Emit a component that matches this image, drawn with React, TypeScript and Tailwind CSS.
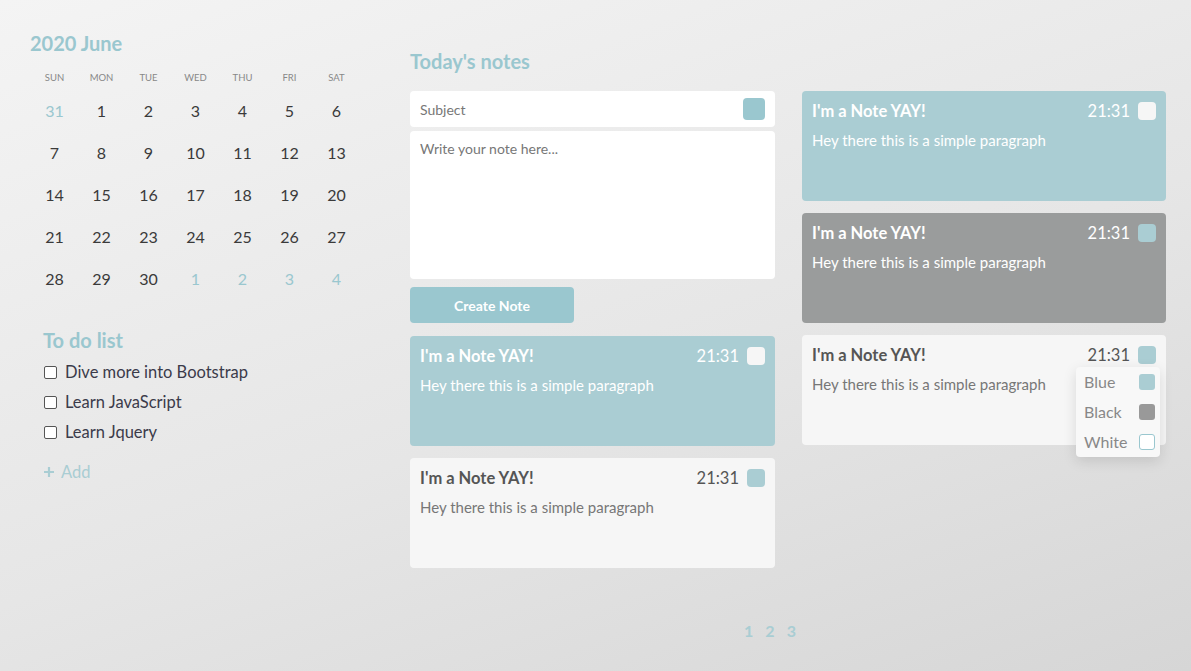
import React from 'react';

const font = { fontFamily: 'Lato, "Open Sans", sans-serif' };

const Note = ({ tone }: { tone: 'blue' | 'gray' | 'white' }) => {
  const bg = tone === 'blue' ? 'bg-[#aacdd3]' : tone === 'gray' ? 'bg-[#9a9c9c]' : 'bg-[#f6f6f6]';
  const text = tone === 'white' ? 'text-[#555]' : 'text-white';
  const body = tone === 'white' ? 'text-[#777]' : 'text-white';
  const swatch = tone === 'blue' ? 'bg-[#f6f6f6]' : 'bg-[#aacdd3]';
  return (
    <div className={`${bg} rounded-[4px] h-[110px] px-[10px] pt-[10px]`}>
      <div className="flex items-center justify-between h-[20px]">
        <span className={`${text} font-bold text-[16.5px]`}>I'm a Note YAY!</span>
        <div className="flex items-center gap-[8px]">
          <span className={`${text} text-[16.5px]`}>21:31</span>
          <span className={`${swatch} w-[18px] h-[18px] rounded-[4px]`} />
        </div>
      </div>
      <p className={`${body} text-[15px] mt-[8px]`}>Hey there this is a simple paragraph</p>
    </div>
  );
};

const days = [
  [31, 1, 2, 3, 4, 5, 6],
  [7, 8, 9, 10, 11, 12, 13],
  [14, 15, 16, 17, 18, 19, 20],
  [21, 22, 23, 24, 25, 26, 27],
  [28, 29, 30, 1, 2, 3, 4],
];

export default function App() {
  return (
    <div
      style={font}
      className="w-[1191px] h-[671px] overflow-hidden bg-[linear-gradient(160deg,#f4f4f4_0%,#e6e6e6_55%,#d6d6d6_100%)] flex"
    >
      {/* left column */}
      <div className="w-[380px] pl-[30px] pt-[31px]">
        <h2 className="text-[#9ac7cf] font-bold text-[20px] leading-[24px]">2020 June</h2>
        <div className="grid grid-cols-7 w-[329px] ml-[1px] mt-[14px]">
          {['SUN', 'MON', 'TUE', 'WED', 'THU', 'FRI', 'SAT'].map((d) => (
            <div key={d} className="text-center text-[9.5px] text-[#888] h-[18px] leading-[18px]">{d}</div>
          ))}
        </div>
        <div className="w-[329px] ml-[1px] mt-[3px]">
          {days.map((row, r) => (
            <div key={r} className="grid grid-cols-7 h-[42px] items-center">
              {row.map((d, i) => {
                const muted = (r === 0 && i === 0) || (r === 4 && i > 2);
                return (
                  <div key={i} className={`text-center text-[16px] ${muted ? 'text-[#9ac7cf]' : 'text-[#3a3a3a]'}`}>{d}</div>
                );
              })}
            </div>
          ))}
        </div>

        <div className="pl-[13px] mt-[28px]">
          <h2 className="text-[#9ac7cf] font-bold text-[20px] leading-[24px]">To do list</h2>
          <div className="mt-[5px] flex flex-col">
            {['Dive more into Bootstrap', 'Learn JavaScript', 'Learn Jquery'].map((t) => (
              <label key={t} className="flex items-center h-[30px] gap-[8px] text-[16.5px] text-[#3b3b4a]">
                <span className="w-[13px] h-[13px] border border-[#555] rounded-[2px] bg-white ml-[1px]" />
                {t}
              </label>
            ))}
          </div>
          <div className="flex items-center gap-[6px] mt-[15px] text-[#a9cdd3] text-[16.5px] h-[20px]">
            <svg width="12" height="12" viewBox="0 0 12 12"><path d="M6 1v10M1 6h10" stroke="#a9cdd3" strokeWidth="2.2" /></svg>
            Add
          </div>
        </div>
      </div>

      {/* notes area */}
      <div className="w-[756px] ml-[30px] pt-[49px] flex flex-col">
        <h2 className="text-[#9ac7cf] font-bold text-[20px] leading-[24px]">Today's notes</h2>
        <div className="flex gap-[27px] mt-[18px]">
          <div className="w-[365px] flex flex-col">
            <div className="bg-white rounded-[4px] h-[36px] flex items-center justify-between px-[10px]">
              <span className="text-[14px] text-[#777]">Subject</span>
              <span className="w-[22px] h-[22px] rounded-[4px] bg-[#9ac7cf]" />
            </div>
            <div className="bg-white rounded-[4px] h-[148px] mt-[4px] px-[10px] pt-[5px]">
              <span className="text-[14px] text-[#777]">Write your note here...</span>
            </div>
            <button className="w-[164px] h-[36px] mt-[8px] rounded-[4px] bg-[#9ac7cf] text-white font-bold text-[14px]">Create Note</button>
            <div className="mt-[13px] flex flex-col gap-[12px]">
              <Note tone="blue" />
              <Note tone="white" />
            </div>
          </div>
          <div className="w-[364px] flex flex-col gap-[12px]">
            <Note tone="blue" />
            <Note tone="gray" />
            <div className="relative">
              <Note tone="white" />
              <div className="absolute right-[6px] top-[32px] w-[84px] bg-[#f8f8f8] rounded-[4px] shadow-[0_4px_14px_rgba(0,0,0,0.12)] flex flex-col">
                {[
                  ['Blue', 'bg-[#aacdd3]'],
                  ['Black', 'bg-[#999]'],
                  ['White', 'bg-white border border-[#9ac7cf]'],
                ].map(([l, c]) => (
                  <div key={l} className="flex items-center justify-between h-[30px] pl-[8px] pr-[5px]">
                    <span className="text-[16px] text-[#888]">{l}</span>
                    <span className={`w-[16px] h-[16px] rounded-[3px] ${c}`} />
                  </div>
                ))}
              </div>
            </div>
          </div>
        </div>
        <div className="flex justify-center gap-[12px] mt-auto mb-[28px] text-[#a9cdd3] font-bold text-[16px] pr-[36px]">
          <span>1</span>
          <span>2</span>
          <span>3</span>
        </div>
      </div>
    </div>
  );
}
